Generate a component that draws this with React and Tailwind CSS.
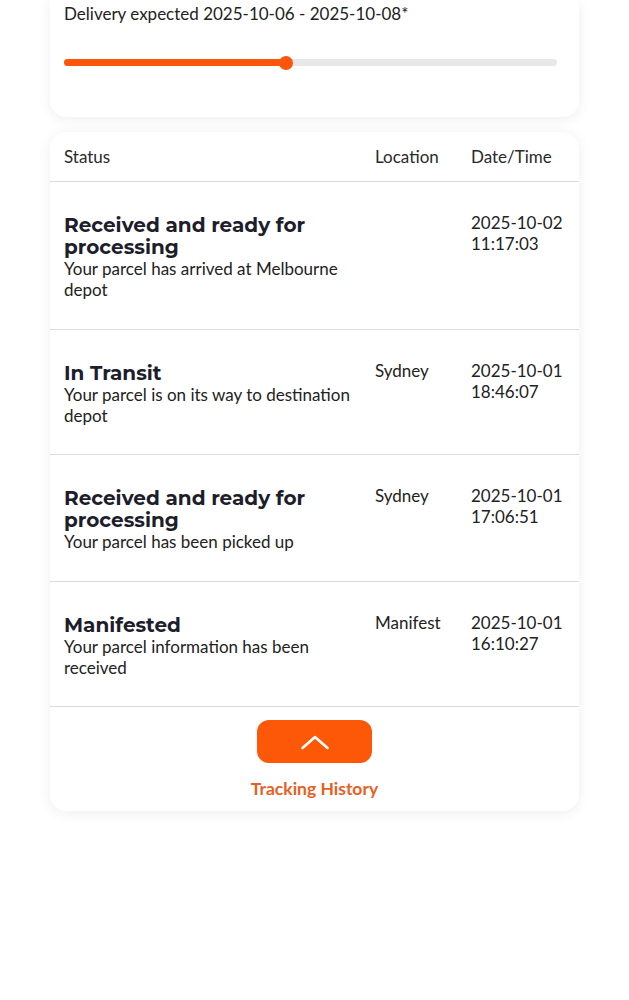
import React from "react";

const rows = [
  {
    title: "Received and ready for processing",
    desc: "Your parcel has arrived at Melbourne depot",
    loc: "",
    date: "2025-10-02",
    time: "11:17:03",
  },
  {
    title: "In Transit",
    desc: "Your parcel is on its way to destination depot",
    loc: "Sydney",
    date: "2025-10-01",
    time: "18:46:07",
  },
  {
    title: "Received and ready for processing",
    desc: "Your parcel has been picked up",
    loc: "Sydney",
    date: "2025-10-01",
    time: "17:06:51",
  },
  {
    title: "Manifested",
    desc: "Your parcel information has been received",
    loc: "Manifest",
    date: "2025-10-01",
    time: "16:10:27",
  },
];

export default function App() {
  return (
    <div
      className="min-h-[1000px] bg-white text-[#222222]"
      style={{ fontFamily: "Lato, 'Open Sans', sans-serif" }}
    >
      <div className="mx-[50px] rounded-b-[16px] bg-white pt-[2px] pb-[51px] pl-[14px] pr-[22px] shadow-[0_2px_14px_rgba(0,0,0,0.07)]">
        <p className="text-[17px] leading-[24px]">
          Delivery expected 2025-10-06 - 2025-10-08*
        </p>
        <div className="relative mt-[33px] h-[7px] rounded-full bg-[#e8e8e8]">
          <div className="absolute left-0 top-0 h-[7px] w-[222px] rounded-full bg-[#fb560c]" />
          <div className="absolute left-[215px] top-[-3.5px] h-[14px] w-[14px] rounded-full bg-[#fb560c]" />
        </div>
      </div>

      <div className="mx-[50px] mt-[15px] rounded-[16px] bg-white shadow-[0_2px_14px_rgba(0,0,0,0.07)]">
        <div className="grid grid-cols-[1fr_82px_94px] gap-x-[14px] border-b-[1.5px] border-[#dcdcdc] px-[14px] pt-[13px] pb-[12px] text-[17px] leading-[24px] text-[#2a2a2a]">
          <div>Status</div>
          <div>Location</div>
          <div>Date/Time</div>
        </div>
        {rows.map((r, i) => (
          <div
            key={i}
            className="grid grid-cols-[1fr_82px_94px] gap-x-[14px] border-b-[1.5px] border-[#dcdcdc] px-[14px] pt-[32px] pb-[28.5px]"
          >
            <div>
              <div
                className="text-[20px] font-bold leading-[22px] text-[#1d1d2b]"
                style={{ fontFamily: "Montserrat, Inter, 'Noto Sans', sans-serif" }}
              >
                {r.title}
              </div>
              <div className="text-[17px] leading-[21px] text-[#222222]">
                {r.desc}
              </div>
            </div>
            <div className="mt-[-2px] text-[17px] leading-[21px] text-[#222222]">
              {r.loc}
            </div>
            <div className="mt-[-2px] text-[17px] leading-[21px] text-[#222222]">
              <div>{r.date}</div>
              <div>{r.time}</div>
            </div>
          </div>
        ))}
        <div className="flex flex-col items-center pt-[13px] pb-[10px]">
          <button className="flex h-[43px] w-[115px] items-center justify-center rounded-[12px] bg-[#fc5808]">
            <svg width="30" height="16" viewBox="0 0 30 16" fill="none">
              <path
                d="M2.5 14 L15 3 L27.5 14"
                stroke="white"
                strokeWidth="2.6"
                strokeLinecap="round"
                strokeLinejoin="round"
              />
            </svg>
          </button>
          <div className="mt-[14px] text-[17.5px] font-bold leading-[24px] text-[#e8601f]">
            Tracking History
          </div>
        </div>
      </div>
    </div>
  );
}
